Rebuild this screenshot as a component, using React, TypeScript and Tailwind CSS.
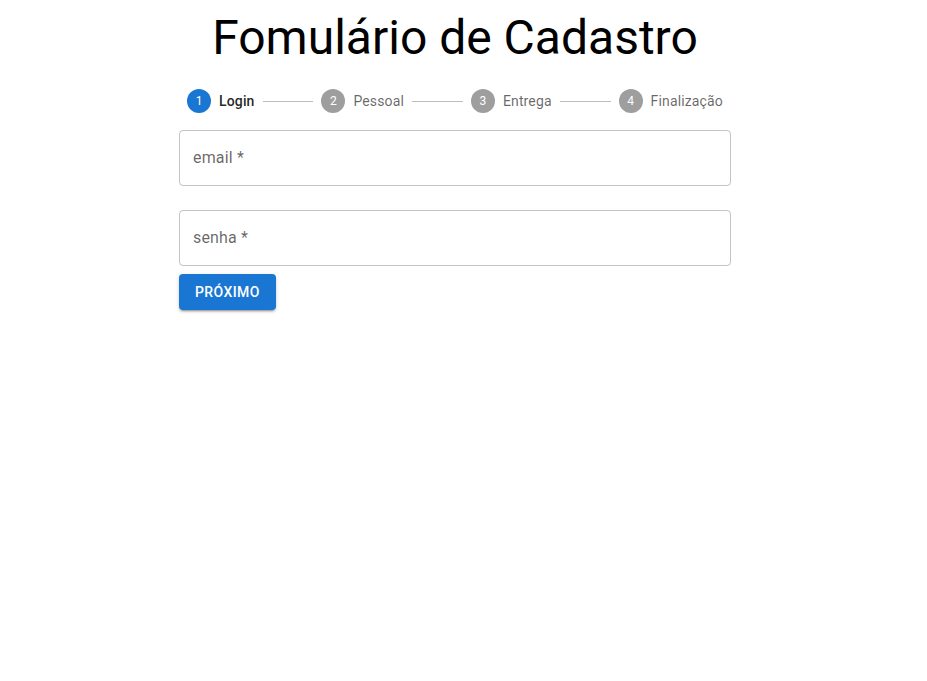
import React from "react"

const steps = ["Login", "Pessoal", "Entrega", "Finalização"]

function Step({ n, label, active }: { n: number; label: string; active: boolean }) {
    return (
        <div className="flex items-center px-2">
            <div
                className={`w-6 h-6 rounded-full flex items-center justify-center text-[12px] text-white ${active ? "bg-[#1976d2]" : "bg-[#9e9e9e]"}`}
            >
                {n}
            </div>
            <span
                className={`pl-2 text-[14px] leading-[1.43] tracking-[0.01071em] ${active ? "font-medium text-[rgba(0,0,0,0.87)]" : "text-[rgba(0,0,0,0.6)]"}`}
            >
                {label}
            </span>
        </div>
    )
}

function Field({ label, className }: { label: string; className?: string }) {
    return (
        <div className={`h-14 w-full rounded-[4px] border border-[rgba(0,0,0,0.23)] flex items-center px-[13px] ${className ?? ""}`}>
            <span className="text-[16px] text-[rgba(0,0,0,0.6)] tracking-[0.00938em]">{label} *</span>
        </div>
    )
}

export default function App() {
    return (
        <div className="w-full min-h-[681px] bg-white font-['Roboto',sans-serif]">
            <div className="w-[910px]">
                <div className="w-[552px] mx-auto">
                    <h1 className="mt-[10px] text-[48px] leading-[1.167] font-normal text-center text-black">
                        Fomulário de Cadastro
                    </h1>
                    {/* stepper */}
                    <div className="flex items-center mt-[23px] h-6">
                        {steps.map((s, i) => (
                            <React.Fragment key={s}>
                                <Step n={i + 1} label={s} active={i === 0} />
                                {i < steps.length - 1 && (
                                    <div className="flex-1 border-t border-[#bdbdbd]" />
                                )}
                            </React.Fragment>
                        ))}
                    </div>
                    <Field label="email" className="mt-[17px]" />
                    <Field label="senha" className="mt-6" />
                    <button className="mt-2 h-9 px-4 rounded-[4px] bg-[#1976d2] text-white text-[14px] font-medium uppercase tracking-[0.02857em] shadow-[0_3px_1px_-2px_rgba(0,0,0,0.2),0_2px_2px_0_rgba(0,0,0,0.14),0_1px_5px_0_rgba(0,0,0,0.12)]">
                        Próximo
                    </button>
                </div>
            </div>
        </div>
    )
}
